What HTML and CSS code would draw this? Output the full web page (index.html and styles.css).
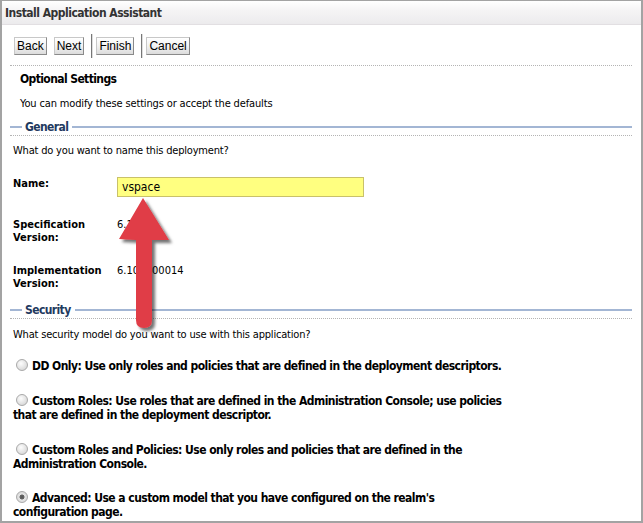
FILE: index.html
```html
<!DOCTYPE html>
<html>
<head>
<meta charset="utf-8">
<link rel="stylesheet" href="styles.css">
</head>
<body>
<div class="window">
  <div class="header">Install Application Assistant</div>
  <div class="content">
    <div class="toolbar">
      <button class="btn">Back</button>
      <button class="btn">Next</button>
      <span class="sep"></span>
      <button class="btn">Finish</button>
      <span class="sep"></span>
      <button class="btn">Cancel</button>
    </div>
    <div class="dotted"></div>
    <h2 class="page-title">Optional Settings</h2>
    <p class="intro">You can modify these settings or accept the defaults</p>

    <div class="legend legend-general"><span class="lg-lead"></span><span class="lg-text">General</span><span class="lg-line"></span></div>
    <div class="dotted dotted-tight"></div>
    <p class="question q-name">What do you want to name this deployment?</p>

    <div class="field field-name">
      <div class="label">Name:</div>
      <div class="input">vspace</div>
    </div>
    <div class="field field-spec">
      <div class="label">Specification<br>Version:</div>
      <div class="value">6.10.0</div>
    </div>
    <div class="field field-impl">
      <div class="label">Implementation<br>Version:</div>
      <div class="value">6.10.0-00014</div>
    </div>

    <div class="legend legend-security"><span class="lg-lead"></span><span class="lg-text">Security</span><span class="lg-line"></span></div>
    <div class="dotted dotted-tight"></div>
    <p class="question q-security">What security model do you want to use with this application?</p>

    <p class="option opt1"><span class="radio"></span>DD Only: Use only roles and policies that are defined in the deployment descriptors.</p>
    <p class="option opt2"><span class="radio"></span>Custom Roles: Use roles that are defined in the Administration Console; use policies<br>that are defined in the deployment descriptor.</p>
    <p class="option opt3"><span class="radio"></span>Custom Roles and Policies: Use only roles and policies that are defined in the<br>Administration Console.</p>
    <p class="option opt4"><span class="radio checked"></span>Advanced: Use a custom model that you have configured on the realm's<br>configuration page.</p>
  </div>

  <svg class="arrow" width="70" height="150" viewBox="0 0 70 150">
    <defs>
      <filter id="sh" x="-30%" y="-20%" width="160%" height="140%">
        <feDropShadow dx="3" dy="3" stdDeviation="1.6" flood-color="#000" flood-opacity="0.55"/>
      </filter>
    </defs>
    <path filter="url(#sh)" fill="#e03c46" d="M25 2 L51 44 L34 44 L34 124 Q34 132 26 132 Q18 132 18 124 L18 44 L1 43 Z"/>
  </svg>
</div>
</body>
</html>
```

FILE: styles.css
```css
* { box-sizing: border-box; }
html, body { margin: 0; padding: 0; background: #fff; }
body {
  font-family: "DejaVu Sans Condensed", "DejaVu Sans", sans-serif;
  font-stretch: condensed;
  color: #000;
}
.window {
  position: relative;
  width: 643px;
  height: 523px;
  border: 2px solid #a3a3a3;
  border-top-width: 1px;
  overflow: hidden;
}
.header {
  height: 24px;
  padding: 5px 0 0 3px;
  font-size: 12px;
  letter-spacing: -0.5px;
  font-weight: bold;
  color: #333;
  background: linear-gradient(#ffffff, #f5f4f5 40%, #ecebed);
  border-bottom: 1px solid #e2dfe2;
}
.content { padding: 0 9px 0 8px; }
.toolbar {
  display: flex;
  align-items: center;
  height: 24px;
  margin-top: 9px;
  padding-left: 4px;
}
.btn {
  height: 18px;
  padding: 0 2px;
  margin: 0 7px 0 0;
  font-family: "Liberation Sans", sans-serif;
  font-stretch: normal;
  font-size: 12px;
  color: #000;
  background: linear-gradient(#ffffff, #f2f2f2 50%, #dcdcdc);
  border: 1px solid;
  border-color: #c8c8c8 #8a8a8a #8a8a8a #c8c8c8;
  border-radius: 0;
}
.sep {
  width: 2px;
  height: 24px;
  margin: 0 3px 0 0;
  background: #777;
  border-right: 1px solid #ddd;
}
.dotted {
  border-top: 1px dotted #b4b4b4;
  margin-top: 7px;
}
.dotted-tight { margin-top: 1px; }
.page-title {
  margin: 5px 0 0 10px;
  font-size: 12px;
  line-height: 16px;
  font-weight: bold;
  letter-spacing: -0.6px;
}
.intro {
  margin: 9px 0 0 10px;
  font-size: 11px;
  line-height: 16px;
  letter-spacing: -0.15px;
}
.legend {
  display: flex;
  align-items: center;
  height: 14px;
}
.legend-general { margin-top: 8px; }
.legend-security { margin-top: 13px; }
.lg-lead { width: 12px; height: 2px; background: #a3b6d4; }
.lg-text {
  padding: 0 4px 0 3px;
  font-size: 12px;
  font-weight: bold;
  letter-spacing: -0.6px;
  color: #1f3a60;
}
.lg-line { flex: 1; height: 2px; background: #a3b6d4; }
.question {
  margin: 0 0 0 3px;
  font-size: 11px;
  line-height: 16px;
  letter-spacing: -0.19px;
}
.q-name { margin-top: 7px; }
.q-security { margin-top: 8px; }
.field { display: flex; align-items: flex-start; }
.label {
  width: 107px;
  padding-left: 3px;
  font-size: 11px;
  font-weight: bold;
  line-height: 13px;
}
.value { font-size: 11px; line-height: 13px; }
.field-name { margin-top: 18px; }
.input {
  width: 247px;
  height: 20px;
  padding: 2px 0 0 4px;
  font-size: 12px;
  line-height: 15px;
  background: #ffff80;
  border: 1px solid #c9c16a;
}
.field-spec { margin-top: 21px; }
.field-impl { margin-top: 20px; }
.option {
  margin: 0 0 0 3px;
  font-size: 12px;
  font-weight: bold;
  letter-spacing: -0.54px;
  line-height: 14px;
}
.opt1 { margin-top: 16px; }
.opt2, .opt3 { margin-top: 21px; }
.opt4 { margin-top: 20px; }
.radio {
  display: inline-block;
  width: 12px;
  height: 12px;
  margin: 0 4px 0 3px;
  vertical-align: -1px;
  border-radius: 50%;
  border: 1px solid #a9a9a9;
  background: radial-gradient(circle at 40% 35%, #fdfdfd, #dcdcdc 70%, #c8c8c8);
}
.radio.checked {
  background: radial-gradient(circle, #555 0, #666 2.2px, #e6e6e6 2.8px, #d0d0d0 100%);
}
.arrow {
  position: absolute;
  left: 116px;
  top: 195px;
}
```
